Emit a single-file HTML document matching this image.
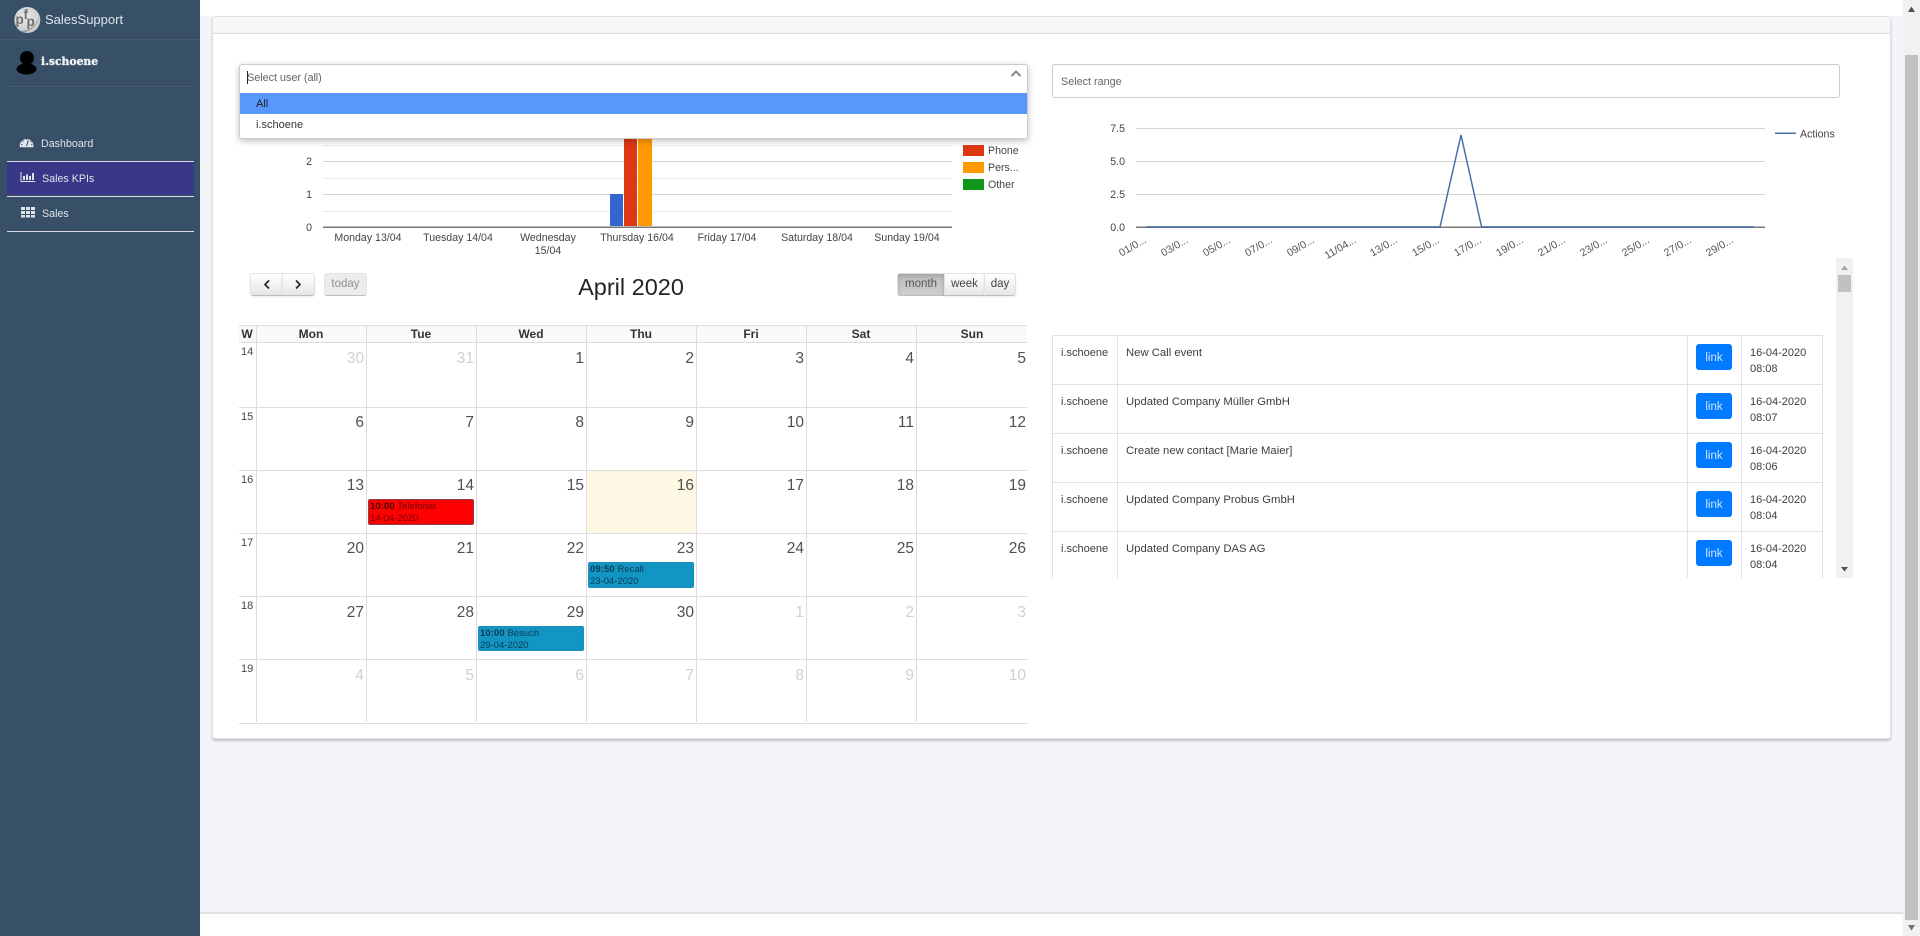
<!DOCTYPE html>
<html><head><meta charset="utf-8"><title>SalesSupport</title>
<style>
html,body{margin:0;padding:0;width:1920px;height:936px;overflow:hidden;background:#f4f5f9;font-family:"Liberation Sans",sans-serif;color:#333}
div,i,span.a{position:absolute;font-style:normal;white-space:nowrap}
.l{background:#ddd}
.h{height:1px;left:239px;width:788px}
.v{width:1px}
.d{width:100px;text-align:right;font-size:15.5px;line-height:16px;color:#505050}
.o{color:#d0d0d0}
.c1{left:264px}.c2{left:374px}.c3{left:484px}.c4{left:594px}.c5{left:704px}.c6{left:814px}.c7{left:926px}
.r1{top:351px}.r2{top:415px}.r3{top:478px}.r4{top:541px}.r5{top:605px}.r6{top:668px}
.w{left:241px;font-size:11px;line-height:12px;color:#444}
.hd{top:327px;width:110px;text-align:center;font-size:12px;line-height:14px;font-weight:bold;color:#333}
.ev{width:104px;height:24px;border:1px solid #1a8fbc;background:#1295c2;border-radius:2px;font-size:9.5px;line-height:12px;color:#0d3a55;padding:0}
.ev span{position:absolute;left:1px;top:1px;white-space:nowrap}
.ev b{letter-spacing:.1px}
.btn{border:1px solid #e2e2e2;border-bottom-color:#bdbdbd;background:linear-gradient(#fff,#e6e6e6);box-shadow:0 1px 2px rgba(0,0,0,.08);box-sizing:border-box;text-align:center;color:#444;font-size:11.5px;line-height:21px}
.tx{font-size:11px;line-height:12px;color:#3d3d3d}
.ds{font-size:11.3px}
.lk{left:1696px;width:36px;height:26px;background:#007bff;border-radius:3px;color:#cfe4ff;font-size:11.5px;line-height:28px;text-align:center}
.nav{color:#dfe3e8;font-size:10.7px;line-height:12px}
.nl{left:7px;width:187px;height:1px;background:#d8dbe6}
</style></head><body>

<!-- top / bottom bars -->
<div style="left:200px;top:0;width:1703px;height:16px;background:#fff"></div>
<div style="left:200px;top:912px;width:1703px;height:24px;background:#fff;border-top:2px solid #dfe1e8;box-sizing:border-box"></div>

<!-- page scrollbar -->
<div style="left:1903px;top:0;width:17px;height:936px;background:#f1f1f1"></div>
<div style="left:1905px;top:55px;width:13px;height:865px;background:#c1c1c1"></div>
<svg style="position:absolute;left:1903px;top:0" width="17" height="936"><path d="M5 12L8.500 6.500L12 12Z" fill="#505050"/><path d="M5 925L8.500 930.500L12 925Z" fill="#707070"/></svg>

<!-- sidebar -->
<div style="left:0;top:0;width:200px;height:936px;background:#375068"></div>
<div style="left:0;top:39px;width:200px;height:1px;background:#46596d"></div>
<div style="left:6px;top:86px;width:188px;height:1px;background:#46596d"></div>
<svg style="position:absolute;left:0;top:0" width="60" height="90">
<defs><radialGradient id="g" cx="45%" cy="40%" r="65%"><stop offset="0" stop-color="#eaeaea"/><stop offset="1" stop-color="#c6c6c6"/></radialGradient></defs>
<circle cx="27.300" cy="20" r="13" fill="url(#g)"/>
<path d="M20 31Q33 31 39.500 17Q36 29 24 32.500Z" fill="#999"/>
<text x="15.500" y="24" font-family="Liberation Sans" font-weight="bold" font-size="13.500" fill="#707070">p</text>
<text x="23.500" y="19" font-family="Liberation Sans" font-weight="bold" font-size="13.500" fill="#707070">f</text>
<text x="26.500" y="26" font-family="Liberation Sans" font-weight="bold" font-size="13.500" fill="#707070">p</text>
<circle cx="27" cy="58" r="7" fill="#000"/><ellipse cx="26.500" cy="69" rx="10" ry="5.500" fill="#000"/>
</svg>
<div style="left:45px;top:12px;font-size:13px;line-height:16px;color:#dfe4e9">SalesSupport</div>
<div style="left:41px;top:55px;font-family:'DejaVu Serif',serif;font-weight:bold;font-size:10.800px;line-height:14px;color:#f4f6f8;text-shadow:0 0 1px #fff">i.schoene</div>

<div class="nav" style="left:41px;top:138px">Dashboard</div>
<div class="nl" style="top:161px"></div>
<div style="left:7px;top:162px;width:187px;height:33px;background:#3a3788"></div>
<div class="nl" style="top:196px"></div>
<div class="nl" style="top:231px"></div>
<div class="nav" style="left:42px;top:173px">Sales KPIs</div>
<div class="nav" style="left:42px;top:208px">Sales</div>
<svg style="position:absolute;left:0;top:130px" width="40" height="100">
<path d="M19.800 17.300A6.900 6.900 0 1 1 33.300 17.300Z" fill="#e4e7eb"/>
<path d="M26.600 16L28.300 10.500" stroke="#375068" stroke-width="1.100"/>
<circle cx="26.600" cy="9" r=".7" fill="#375068"/><circle cx="23" cy="11" r=".7" fill="#375068"/><circle cx="31" cy="11.500" r=".7" fill="#375068"/><circle cx="21.800" cy="14.500" r=".7" fill="#375068"/><circle cx="31.800" cy="14.500" r=".7" fill="#375068"/>
<path d="M21 42V51.500H35.300" stroke="#dfe3e8" fill="none"/>
<path d="M23 46h2v4h-2zM26 44.500h2v5.500h-2zM29 46h2v4h-2zM32 43h2v7h-2z" fill="#dfe3e8"/>
<path d="M21 77h4v3h-4zM26 77h4v3h-4zM31 77h4v3h-4zM21 81h4v3h-4zM26 81h4v3h-4zM31 81h4v3h-4zM21 85h4v2.500h-4zM26 85h4v2.500h-4zM31 85h4v2.500h-4z" fill="#dfe3e8"/>
</svg>

<!-- card -->
<div style="left:212px;top:16px;width:1679px;height:723px;background:#fff;border:1px solid #dfe1e3;box-sizing:border-box;border-radius:3px;box-shadow:0 2px 2px rgba(0,0,0,.2)"></div>
<div style="left:213px;top:17px;width:1677px;height:16px;background:#f7f7f7;border-bottom:1px solid #dcdcdc"></div>

<!-- charts -->
<svg style="position:absolute;left:0;top:0" width="1920" height="936" font-family="Liberation Sans" font-size="10.600" fill="#444">
<g fill="#ebebeb"><rect x="323" y="145" width="629" height="1"/><rect x="323" y="178" width="629" height="1"/><rect x="323" y="211" width="629" height="1"/></g>
<g fill="#d4d4d4"><rect x="323" y="161" width="629" height="1"/><rect x="323" y="194" width="629" height="1"/></g>
<rect x="610" y="194" width="13" height="33" fill="#3366cc"/>
<rect x="624" y="100" width="13" height="127" fill="#dc3912"/>
<rect x="638" y="100" width="14" height="127" fill="#ff9900"/>
<rect x="323" y="226" width="629" height="1" fill="#bbb"/><rect x="323" y="227" width="629" height="1" fill="#777"/>
<g text-anchor="end"><text x="312" y="165">2</text><text x="312" y="198">1</text><text x="312" y="231">0</text></g>
<g text-anchor="middle">
<text x="368" y="241">Monday 13/04</text><text x="458" y="241">Tuesday 14/04</text><text x="548" y="241">Wednesday</text><text x="548" y="254">15/04</text><text x="637" y="241">Thursday 16/04</text><text x="727" y="241">Friday 17/04</text><text x="817" y="241">Saturday 18/04</text><text x="907" y="241">Sunday 19/04</text>
</g>
<rect x="963" y="145" width="21" height="11" fill="#dc3912"/><rect x="963" y="162" width="21" height="11" fill="#ff9900"/><rect x="963" y="179" width="21" height="11" fill="#109618"/>
<text x="988" y="154">Phone</text><text x="988" y="171">Pers...</text><text x="988" y="188">Other</text>

<g fill="#d4d4d4"><rect x="1136" y="128" width="629" height="1"/><rect x="1136" y="161" width="629" height="1"/><rect x="1136" y="194" width="629" height="1"/></g>
<rect x="1136" y="226" width="629" height="1" fill="#bbb"/><rect x="1136" y="227" width="629" height="1" fill="#777"/>
<g text-anchor="end"><text x="1125" y="132">7.5</text><text x="1125" y="165">5.0</text><text x="1125" y="198">2.5</text><text x="1125" y="231">0.0</text></g>
<polyline points="1146.600,227 1440,227 1461,135 1481.600,227 1753.800,227" fill="none" stroke="#476ea8" stroke-width="1.500"/>
<rect x="1775" y="132.500" width="21" height="1.500" fill="#476ea8"/>
<text x="1800" y="137.500">Actions</text>
<g text-anchor="end" fill="#555">
<text transform="rotate(-30 1147 242)" x="1147" y="242">01/0...</text>
<text transform="rotate(-30 1189 242)" x="1189" y="242">03/0...</text>
<text transform="rotate(-30 1231 242)" x="1231" y="242">05/0...</text>
<text transform="rotate(-30 1273 242)" x="1273" y="242">07/0...</text>
<text transform="rotate(-30 1315 242)" x="1315" y="242">09/0...</text>
<text transform="rotate(-30 1357 242)" x="1357" y="242">11/04...</text>
<text transform="rotate(-30 1398 242)" x="1398" y="242">13/0...</text>
<text transform="rotate(-30 1440 242)" x="1440" y="242">15/0...</text>
<text transform="rotate(-30 1482 242)" x="1482" y="242">17/0...</text>
<text transform="rotate(-30 1524 242)" x="1524" y="242">19/0...</text>
<text transform="rotate(-30 1566 242)" x="1566" y="242">21/0...</text>
<text transform="rotate(-30 1608 242)" x="1608" y="242">23/0...</text>
<text transform="rotate(-30 1650 242)" x="1650" y="242">25/0...</text>
<text transform="rotate(-30 1692 242)" x="1692" y="242">27/0...</text>
<text transform="rotate(-30 1734 242)" x="1734" y="242">29/0...</text>
</g>
</svg>

<!-- select user dropdown -->
<div style="left:239px;top:64px;width:789px;height:75px;background:#fff;border:1px solid #ccc;box-sizing:border-box;border-radius:3px;box-shadow:0 2px 7px rgba(0,0,0,.25)"></div>
<div style="left:240px;top:93px;width:787px;height:21px;background:#5897fb"></div>
<div style="left:247px;top:71px;width:1px;height:13px;background:#222"></div>
<div class="tx" style="left:247px;top:72px;color:#666;letter-spacing:-.1px">Select user (all)</div>
<div class="tx" style="left:256px;top:98px;color:#222">All</div>
<div class="tx" style="left:256px;top:119px;color:#333">i.schoene</div>
<svg style="position:absolute;left:1009px;top:68px" width="14" height="10"><polyline points="2.500,8 7,3.500 11.500,8" fill="none" stroke="#888" stroke-width="2"/></svg>

<!-- select range -->
<div style="left:1052px;top:64px;width:788px;height:34px;background:#fff;border:1px solid #ccc;box-sizing:border-box;border-radius:3px"></div>
<div class="tx" style="left:1061px;top:76px;color:#666;font-size:10.800px">Select range</div>

<!-- calendar toolbar -->
<div class="btn" style="left:250px;top:273px;width:33px;height:23px;border-radius:3px 0 0 3px"></div>
<div class="btn" style="left:282px;top:273px;width:33px;height:23px;border-radius:0 3px 3px 0"></div>
<svg style="position:absolute;left:250px;top:273px" width="65" height="23"><polyline points="19,7.500 15,11.500 19,15.500" fill="none" stroke="#222" stroke-width="1.600"/><polyline points="46,7.500 50,11.500 46,15.500" fill="none" stroke="#222" stroke-width="1.600"/></svg>
<div class="btn" style="left:324px;top:273px;width:43px;height:23px;border-radius:3px;background:#ececec;color:#8f8f8f;box-shadow:none">today</div>
<div style="left:531px;top:274px;width:200px;text-align:center;font-size:23.500px;line-height:26px;color:#212529">April 2020</div>
<div class="btn" style="left:897px;top:273px;width:48px;height:23px;border-radius:3px 0 0 3px;background:linear-gradient(#bcbcbc,#cfcfcf);box-shadow:inset 0 2px 4px rgba(0,0,0,.15);color:#555">month</div>
<div class="btn" style="left:944px;top:273px;width:41px;height:23px">week</div>
<div class="btn" style="left:984px;top:273px;width:32px;height:23px;border-radius:0 3px 3px 0">day</div>

<!-- calendar grid -->
<div style="left:239px;top:325px;width:788px;height:17px;background:#f9f9f9"></div>
<div style="left:586px;top:471px;width:110px;height:62px;background:#fcf8e3"></div>
<div class="l h" style="top:325px"></div><div class="l h" style="top:342px"></div><div class="l h" style="top:407px"></div><div class="l h" style="top:470px"></div><div class="l h" style="top:533px"></div><div class="l h" style="top:596px"></div><div class="l h" style="top:659px"></div><div class="l h" style="top:723px"></div>
<div class="l v" style="left:256px;top:325px;height:397px"></div><div class="l v" style="left:366px;top:325px;height:397px"></div><div class="l v" style="left:476px;top:325px;height:397px"></div><div class="l v" style="left:586px;top:325px;height:397px"></div><div class="l v" style="left:696px;top:325px;height:397px"></div><div class="l v" style="left:806px;top:325px;height:397px"></div><div class="l v" style="left:916px;top:325px;height:397px"></div>

<div class="hd" style="left:239px;width:16px;">W</div>
<div class="hd" style="left:256px">Mon</div><div class="hd" style="left:366px">Tue</div><div class="hd" style="left:476px">Wed</div><div class="hd" style="left:586px">Thu</div><div class="hd" style="left:696px">Fri</div><div class="hd" style="left:806px">Sat</div><div class="hd" style="left:917px">Sun</div>

<i class="w" style="top:346px">14</i><i class="w" style="top:411px">15</i><i class="w" style="top:474px">16</i><i class="w" style="top:537px">17</i><i class="w" style="top:600px">18</i><i class="w" style="top:663px">19</i>

<i class="d o c1 r1">30</i><i class="d o c2 r1">31</i><i class="d c3 r1">1</i><i class="d c4 r1">2</i><i class="d c5 r1">3</i><i class="d c6 r1">4</i><i class="d c7 r1">5</i>
<i class="d c1 r2">6</i><i class="d c2 r2">7</i><i class="d c3 r2">8</i><i class="d c4 r2">9</i><i class="d c5 r2">10</i><i class="d c6 r2">11</i><i class="d c7 r2">12</i>
<i class="d c1 r3">13</i><i class="d c2 r3">14</i><i class="d c3 r3">15</i><i class="d c4 r3">16</i><i class="d c5 r3">17</i><i class="d c6 r3">18</i><i class="d c7 r3">19</i>
<i class="d c1 r4">20</i><i class="d c2 r4">21</i><i class="d c3 r4">22</i><i class="d c4 r4">23</i><i class="d c5 r4">24</i><i class="d c6 r4">25</i><i class="d c7 r4">26</i>
<i class="d c1 r5">27</i><i class="d c2 r5">28</i><i class="d c3 r5">29</i><i class="d c4 r5">30</i><i class="d o c5 r5">1</i><i class="d o c6 r5">2</i><i class="d o c7 r5">3</i>
<i class="d o c1 r6">4</i><i class="d o c2 r6">5</i><i class="d o c3 r6">6</i><i class="d o c4 r6">7</i><i class="d o c5 r6">8</i><i class="d o c6 r6">9</i><i class="d o c7 r6">10</i>

<div class="ev" style="left:368px;top:499px;background:#ff0000;border-color:#8c3a4c;color:#720505"><span><b style="color:#450000">10:00</b> Telefonat<br>14-04-2020</span></div>
<div class="ev" style="left:588px;top:562px"><span><b>09:50</b> Recall<br>23-04-2020</span></div>
<div class="ev" style="left:478px;top:626px;height:23px"><span><b>10:00</b> Besuch<br>29-04-2020</span></div>

<!-- log table -->
<div style="left:1836px;top:258px;width:17px;height:320px;background:#f1f1f1"></div>
<div style="left:1838px;top:275px;width:13px;height:17px;background:#c1c1c1"></div>
<svg style="position:absolute;left:1836px;top:258px" width="17" height="320"><path d="M5 12L8.500 7.500L12 12Z" fill="#a3a3a3"/><path d="M5 309L8.500 313.500L12 309Z" fill="#505050"/></svg>

<div style="left:1052px;top:335px;width:771px;height:243px;overflow:hidden">
<div style="left:0;top:0;width:771px;height:1px;background:#dee2e6"></div>
<div style="left:0;top:49px;width:771px;height:1px;background:#dee2e6"></div>
<div style="left:0;top:98px;width:771px;height:1px;background:#dee2e6"></div>
<div style="left:0;top:147px;width:771px;height:1px;background:#dee2e6"></div>
<div style="left:0;top:196px;width:771px;height:1px;background:#dee2e6"></div>
<div style="left:0;top:0;width:1px;height:243px;background:#dee2e6"></div>
<div style="left:65px;top:0;width:1px;height:243px;background:#dee2e6"></div>
<div style="left:635px;top:0;width:1px;height:243px;background:#dee2e6"></div>
<div style="left:689px;top:0;width:1px;height:243px;background:#dee2e6"></div>
<div style="left:770px;top:0;width:1px;height:243px;background:#dee2e6"></div>
</div>

<div class="tx" style="left:1061px;top:347px">i.schoene</div><div class="tx ds" style="left:1126px;top:347px">New Call event</div><div class="lk" style="top:344px">link</div><div class="tx" style="left:1750px;top:347px">16-04-2020</div><div class="tx" style="left:1750px;top:363px">08:08</div>
<div class="tx" style="left:1061px;top:396px">i.schoene</div><div class="tx ds" style="left:1126px;top:396px">Updated Company Müller GmbH</div><div class="lk" style="top:393px">link</div><div class="tx" style="left:1750px;top:396px">16-04-2020</div><div class="tx" style="left:1750px;top:412px">08:07</div>
<div class="tx" style="left:1061px;top:445px">i.schoene</div><div class="tx ds" style="left:1126px;top:445px">Create new contact [Marie Maier]</div><div class="lk" style="top:442px">link</div><div class="tx" style="left:1750px;top:445px">16-04-2020</div><div class="tx" style="left:1750px;top:461px">08:06</div>
<div class="tx" style="left:1061px;top:494px">i.schoene</div><div class="tx ds" style="left:1126px;top:494px">Updated Company Probus GmbH</div><div class="lk" style="top:491px">link</div><div class="tx" style="left:1750px;top:494px">16-04-2020</div><div class="tx" style="left:1750px;top:510px">08:04</div>
<div class="tx" style="left:1061px;top:543px">i.schoene</div><div class="tx ds" style="left:1126px;top:543px">Updated Company DAS AG</div><div class="lk" style="top:540px">link</div><div class="tx" style="left:1750px;top:543px">16-04-2020</div><div class="tx" style="left:1750px;top:559px">08:04</div>

</body></html>
